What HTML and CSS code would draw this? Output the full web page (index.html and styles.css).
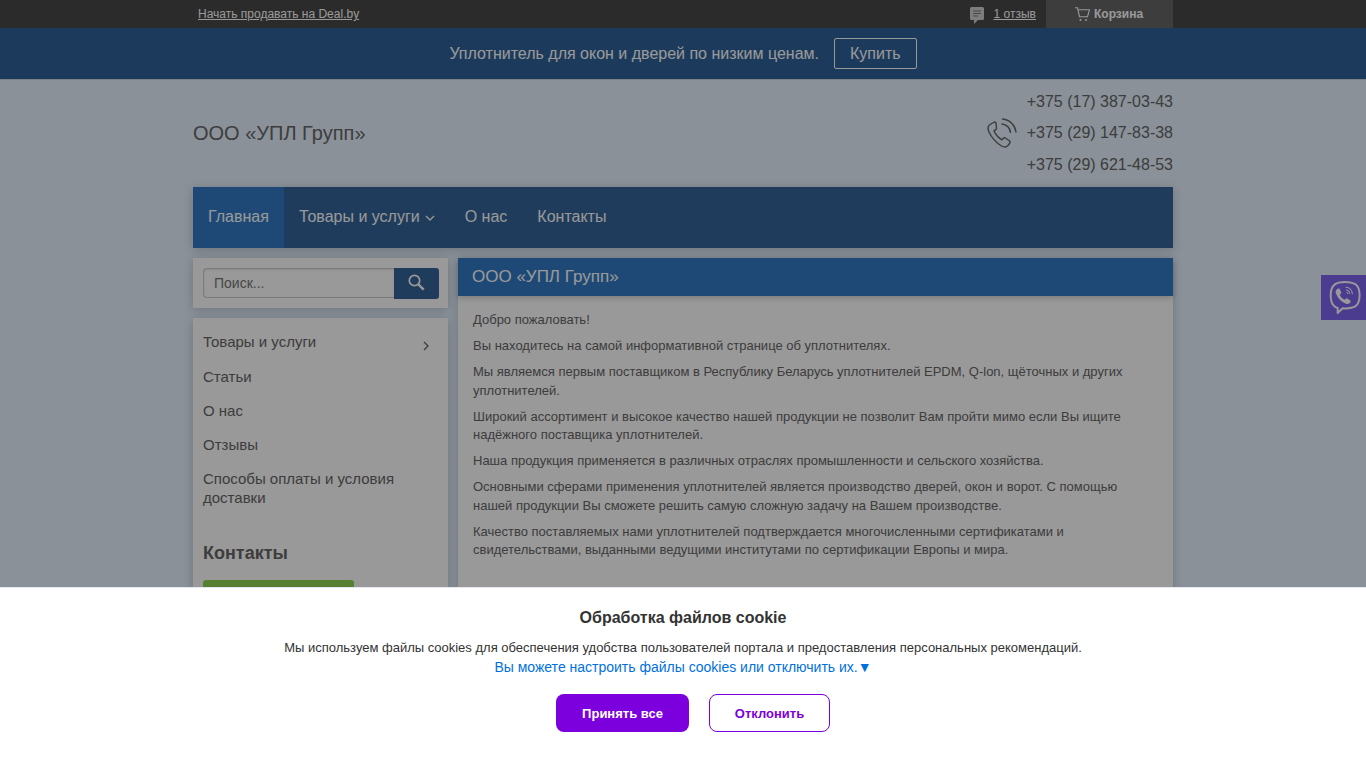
FILE: index.html
```html
<!DOCTYPE html>
<html lang="ru">
<head>
  <meta charset="UTF-8" />
  <meta name="viewport" content="width=device-width, initial-scale=1.0" />
  <title>ООО «УПЛ Групп»</title>
  <link rel="stylesheet" href="styles.css">
</head>
<body>
  <div class="topbar">
    <div class="wrap topbar-inner">
      <a class="sell-link" href="#">Начать продавать на Deal.by</a>
      <div class="topbar-right">
        <svg class="icon-comment" width="14" height="17" viewBox="0 0 14 17">
          <path d="M1.5 0h11A1.5 1.5 0 0 1 14 1.500v10a1.500 1.500 0 0 1-1.500 1.500H8l-4 4v-4H1.500A1.500 1.500 0 0 1 0 11.500v-10A1.500 1.500 0 0 1 1.500 0z" fill="#fff" opacity=".75"/>
          <path d="M3 4h8M3 6.500h8M3 9h5" stroke="#777" stroke-width="1" fill="none"/>
        </svg>
        <a class="reviews-link" href="#">1 отзыв</a>
        <a class="cart" href="#">
          <svg width="15" height="15" viewBox="0 0 15 15" fill="none" stroke="#fff">
            <path d="M0 .7h2.500l2 9h8l2-7H3.200" stroke-width="1.100"/>
            <circle cx="5.500" cy="13" r="1" fill="#fff" stroke="none"/>
            <circle cx="11" cy="13" r="1" fill="#fff" stroke="none"/>
          </svg>
          Корзина
        </a>
      </div>
    </div>
  </div>

  <div class="promo">
    <span>Уплотнитель для окон и дверей по низким ценам.</span>
    <a class="promo-btn" href="#">Купить</a>
  </div>

  <div class="wrap">
    <header class="site-header">
      <div class="company">ООО «УПЛ Групп»</div>
      <div class="phones-block">
        <svg width="30" height="30" viewBox="0 0 30 30" fill="none" stroke="#666" stroke-width="1.400" stroke-linecap="round" stroke-linejoin="round">
          <path d="M6.500 4.500 3 6.500C.8 8 .6 11 2 14c2.500 5.500 7 10.500 12.500 14 2.500 1.400 5 1.300 6.500-.5l1.800-2.500c.5-.8.300-1.600-.4-2.200l-4-2.800c-.8-.5-1.500-.4-2.100.3l-1.300 1.600c-3-1.700-6.300-5.300-8-9l1.800-1.300c.8-.6 1-1.300.6-2.100L9 4.900c-.6-.8-1.600-1-2.500-.4z"/>
          <path d="M15 6c4.500.6 7.800 3.800 8.500 8.300"/>
          <path d="M15.500 1c7 .5 12.500 6 13.500 13"/>
        </svg>
        <div class="phones">
          <div>+375 (17) 387-03-43</div>
          <div>+375 (29) 147-83-38</div>
          <div>+375 (29) 621-48-53</div>
        </div>
      </div>
    </header>

    <nav class="main-nav">
      <a class="active" href="#">Главная</a>
      <a href="#">Товары и услуги
        <svg width="10" height="6" viewBox="0 0 10 6" fill="none" stroke="#fff" stroke-width="1.300"><path d="M1 1l4 4 4-4"/></svg>
      </a>
      <a href="#">О нас</a>
      <a href="#">Контакты</a>
    </nav>

    <div class="columns">
      <aside class="sidebar">
        <div class="panel search-panel">
          <input class="search-input" type="text" placeholder="Поиск..." />
          <button class="search-btn" aria-label="Поиск">
            <svg width="17" height="17" viewBox="0 0 17 17" fill="none" stroke="#fff"><circle cx="6.500" cy="6.500" r="5.200" stroke-width="1.700"/><path d="M10.500 10.500l5.200 5.200" stroke-width="2.400"/></svg>
          </button>
        </div>

        <div class="panel side-panel">
          <ul class="side-menu">
            <li class="has-sub">Товары и услуги
              <svg width="6" height="10" viewBox="0 0 6 10" fill="none" stroke="#666" stroke-width="1.300"><path d="M1 1l4 4-4 4"/></svg>
            </li>
            <li>Статьи</li>
            <li>О нас</li>
            <li>Отзывы</li>
            <li>Способы оплаты и условия доставки</li>
          </ul>
          <h3>Контакты</h3>
          <div class="green-btn"></div>
        </div>
      </aside>

      <main class="content">
        <h2 class="content-title">ООО «УПЛ Групп»</h2>
        <div class="content-body">
          <p>Добро пожаловать!</p>
          <p>Вы находитесь на самой информативной странице об уплотнителях.</p>
          <p>Мы являемся первым поставщиком в Республику Беларусь уплотнителей EPDM, Q-lon, щёточных и других уплотнителей.</p>
          <p>Широкий ассортимент и высокое качество нашей продукции не позволит Вам пройти мимо если Вы ищите надёжного поставщика уплотнителей.</p>
          <p>Наша продукция применяется в различных отраслях промышленности и сельского хозяйства.</p>
          <p>Основными сферами применения уплотнителей является производство дверей, окон и ворот. С помощью нашей продукции Вы сможете решить самую сложную задачу на Вашем производстве.</p>
          <p>Качество поставляемых нами уплотнителей подтверждается многочисленными сертификатами и свидетельствами, выданными ведущими институтами по сертификации Европы и мира.</p>
        </div>
      </main>
    </div>
  </div>

  <a class="viber" href="#" aria-label="Viber">
    <svg width="32" height="35" viewBox="0 0 34 36" fill="none" stroke="#fff" stroke-linecap="round" stroke-linejoin="round">
      <path d="M17 1.500c-4 0-8 .5-10.800 2.500C3 6.300 1.800 10 1.800 15.500c0 5.500 1 9.500 4.200 12 1 .8 2 1.200 3.200 1.500v5.500l5.300-5c5.500.3 10.500-.2 13.800-2.400 3-2.300 4.200-6 4.200-11.600 0-5.500-1.200-9.200-4.300-11.500C25 2 21 1.500 17 1.500z" stroke-width="2.100"/>
      <path d="M11 8.500c-1-.3-1.800 0-2.600.8-1.300 1.300-1.600 2.800-1 4.400 2.100 5.300 5.500 8.800 10.600 11 1.500.6 3 .2 4.300-1.100 1-1 1-2-.1-2.800l-2.300-1.600c-.9-.6-1.700-.4-2.300.4l-.7.9c-2.500-1-4.500-3-5.500-5.500l1-.8c.8-.6.9-1.400.4-2.200L11 8.500z" fill="#fff" stroke="none"/>
      <path d="M18 7c3.500.2 6.500 3 6.800 7M18.500 10c2 .2 3.300 1.700 3.500 3.800M19 12.700c.6.100 1 .5 1.100 1.100" stroke-width="1.100"/>
    </svg>
  </a>

  <div class="overlay"></div>

  <div class="cookie">
    <div class="cookie-title">Обработка файлов cookie</div>
    <p class="cookie-text">Мы используем файлы cookies для обеспечения удобства пользователей портала и предоставления персональных рекомендаций.</p>
    <a class="cookie-link" href="#">Вы можете настроить файлы cookies или отключить их.▼</a>
    <div class="cookie-actions">
      <button class="btn-accept">Принять все</button>
      <button class="btn-decline">Отклонить</button>
    </div>
  </div>
</body>
</html>
```

FILE: styles.css
```css
* {
  box-sizing: border-box;
  margin: 0;
  padding: 0;
}

html,
body {
  height: 100%;
  overflow: hidden;
}

body {
  font-family: "Liberation Sans", Arial, sans-serif;
  background: #e6f2ff;
  color: #666;
}

a {
  color: inherit;
}

.wrap {
  width: 980px;
  margin: 0 auto;
}

/* top bar */
.topbar {
  height: 28px;
  background: #484848;
  color: #fff;
  font-size: 12px;
}

.topbar-inner {
  display: flex;
  justify-content: space-between;
  align-items: center;
  height: 100%;
  padding-left: 5px;
}

.topbar-right {
  display: flex;
  align-items: center;
  height: 100%;
}

.icon-comment {
  margin-right: 10px;
  margin-top: 2px;
}

.reviews-link {
  margin-right: 10px;
}

.cart {
  display: flex;
  align-items: center;
  gap: 4px;
  height: 100%;
  width: 127px;
  padding-left: 29px;
  background: #666;
  font-weight: bold;
  text-decoration: none;
}

/* promo strip */
.promo {
  display: flex;
  justify-content: center;
  align-items: center;
  gap: 15px;
  height: 52px;
  background: #306299;
  border-bottom: 1px solid #d0d8e0;
  color: #fff;
  font-size: 16px;
}

.promo-btn {
  padding: 0 15px;
  line-height: 29px;
  border: 1px solid #fff;
  border-radius: 2px;
  text-decoration: none;
}

/* header */
.site-header {
  display: flex;
  justify-content: space-between;
  align-items: center;
  height: 107px;
  padding-bottom: 1px;
}

.company {
  font-size: 20px;
}

.phones-block {
  display: flex;
  align-items: center;
  gap: 10px;
  font-size: 16px;
}

.phones div {
  line-height: 31.5px;
  text-align: right;
}

/* navigation */
.main-nav {
  display: flex;
  height: 61px;
  background: #346499;
  box-shadow: 0 2px 10px rgba(0,0,0,0.2);
  font-size: 16px;
}

.main-nav a {
  display: flex;
  align-items: center;
  gap: 5px;
  padding: 0 15px 2px;
  color: #fff;
  text-decoration: none;
}

.main-nav a.active {
  background: #327bc5;
}

.main-nav svg {
  margin-top: 3px;
}

/* columns */
.columns {
  display: grid;
  grid-template-columns: 255px 715px;
  gap: 10px;
  margin-top: 10px;
}

.panel {
  background: #fff;
  box-shadow: 0 2px 10px rgba(0,0,0,0.2);
}

.search-panel {
  display: flex;
  height: 50px;
  padding: 10px 9px 10px 10px;
}

.search-input {
  flex: 1;
  min-width: 0;
  height: 30px;
  padding: 0 10px;
  border: 1px solid #ccc;
  border-right: none;
  border-radius: 4px 0 0 4px;
  background: #fff;
  font-family: inherit;
  font-size: 14px;
  box-shadow: inset 0 1px 2px rgba(0,0,0,0.1);
}

.search-input::placeholder {
  color: #777;
}

.search-btn {
  display: flex;
  justify-content: center;
  align-items: center;
  width: 45px;
  height: 31px;
  padding-bottom: 2px;
  background: #346499;
  border: none;
  border-radius: 0 3px 3px 0;
}

.side-panel {
  height: 320px;
  margin-top: 10px;
  padding: 14px 10px 0;
}

.side-menu {
  list-style: none;
  font-size: 15px;
  line-height: 19px;
}

.side-menu li {
  padding-bottom: 15px;
}

.side-menu .has-sub {
  display: flex;
  justify-content: space-between;
  padding-bottom: 16px;
  padding-right: 9px;
}

.side-menu .has-sub svg {
  margin-top: 9px;
}

.side-panel h3 {
  margin-top: 19px;
  font-size: 18px;
  line-height: 24px;
}

.green-btn {
  width: 151px;
  height: 40px;
  margin-top: 15px;
  background: #8fd44f;
  border-radius: 3px;
}

/* main content */
.content {
  background: #fff;
  box-shadow: 0 2px 10px rgba(0,0,0,0.2);
  height: 400px;
}

.content-title {
  height: 38px;
  padding-left: 14px;
  background: #327bc5;
  box-shadow: 0 2px 6px rgba(0,0,0,0.2);
  color: #fff;
  font-size: 17px;
  font-weight: normal;
  line-height: 38px;
}

.content-body {
  padding: 15px 15px;
  font-size: 13px;
  line-height: 1.4;
}

.content-body p {
  margin-bottom: 8px;
}

/* viber button */
.viber {
  position: fixed;
  top: 275px;
  right: 0;
  display: flex;
  justify-content: center;
  align-items: center;
  width: 45px;
  height: 45px;
  padding-left: 2px;
  background: #7f65ee;
}

/* cookie dialog */
.overlay {
  position: fixed;
  inset: 0;
  background: rgba(0,0,0,0.4);
}

.cookie {
  position: fixed;
  left: 0;
  right: 0;
  bottom: 0;
  height: 181px;
  padding-top: 20px;
  background: #fff;
  border-top: 1px solid #e6e6f2;
  color: #333;
  text-align: center;
}

.cookie-title {
  font-size: 16px;
  font-weight: bold;
  line-height: 19px;
}

.cookie-text {
  margin-top: 11px;
  font-size: 13px;
  line-height: 19px;
}

.cookie-link {
  display: block;
  color: #0070e0;
  font-size: 14px;
  line-height: 20px;
  text-decoration: none;
}

.cookie-actions {
  display: flex;
  justify-content: center;
  gap: 20px;
  margin-top: 17px;
  padding-left: 20px;
}

.cookie-actions button {
  height: 38px;
  border-radius: 8px;
  font-family: inherit;
  font-size: 13px;
  font-weight: bold;
}

.btn-accept {
  width: 133px;
  background: #7b00dd;
  border: none;
  color: #fff;
}

.btn-decline {
  width: 121px;
  background: #fff;
  border: 1px solid #7b00dd;
  color: #7b00dd;
}
```
